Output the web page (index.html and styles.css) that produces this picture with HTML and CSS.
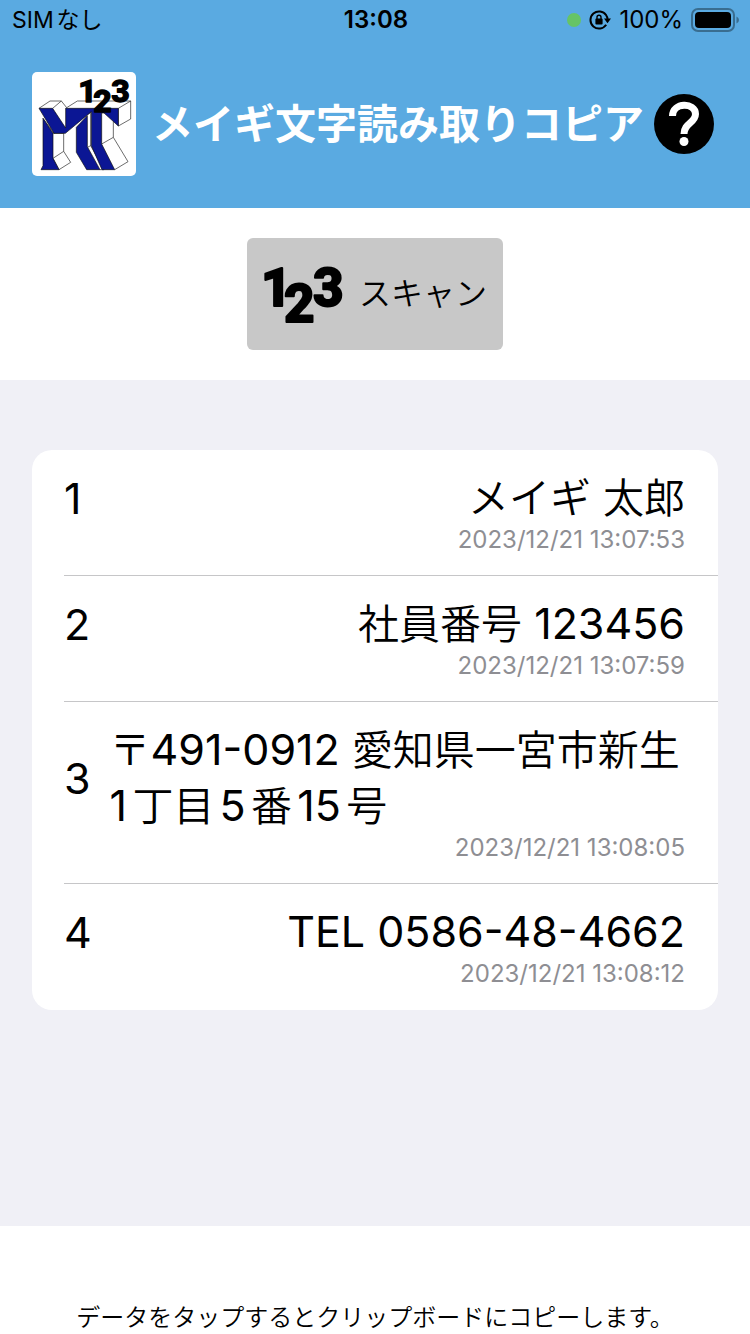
FILE: index.html
```html
<!DOCTYPE html>
<html lang="ja">
<head>
    <meta charset="UTF-8">
    <meta name="viewport" content="width=device-width, initial-scale=1.0">
    <title>メイギ文字読み取りコピア</title>
    <link rel="stylesheet" href="styles.css">
</head>
<body>
    <div class="status-bar">
        <span class="carrier">SIMなし</span>
        <span class="time">13:08</span>
        <span class="indicators">
            <span class="camera-dot"></span>
            <svg class="lock-icon" width="22" height="20" viewBox="0 0 22 20">
                <path d="M17.2 5.2A8.6 8.6 0 1 0 17.2 14.8" fill="none" stroke="#000" stroke-width="2"/>
                <path d="M17 5A9 9 0 0 1 18.6 9" fill="none" stroke="#000" stroke-width="2"/>
                <path d="M15 8.6h7l-3.5 4.6z"/>
                <rect x="6.4" y="8.6" width="7.2" height="5.8" rx="1"/>
                <path d="M8 9V7.2a2 2 0 0 1 4 0V9" fill="none" stroke="#000" stroke-width="1.4"/>
            </svg>
            <span class="percent">100%</span>
            <svg class="battery-icon" width="49" height="24" viewBox="0 0 49 24">
                <rect x="1" y="1" width="42" height="22" rx="6" fill="none" stroke="#396d90" stroke-width="2"/>
                <rect x="4" y="4" width="36" height="16" rx="4"/>
                <path d="M45.500 8.500v7q2.500-1 2.500-3.500t-2.500-3.500z" fill="#396d90"/>
            </svg>
        </span>
    </div>

    <header class="header">
        <svg class="logo" viewBox="24 24 312 312" role="img" aria-label="MT 123">
            <g fill="#fff" stroke="#222" stroke-width="2">
                <path d="M45 133L78 111H112L128 131M86 133L112 111"/>
                <path d="M125 133L160 111H320V165L283 186V133L320 111"/>
                <path d="M87 208H119V262L87 283M119 262L140 295L105 317L87 283"/>
                <path d="M57 163L90 208M190 152L200 145V245L240 317H228M190 250L200 245"/>
                <path d="M268 172V220L233 240M268 220L312 293L272 317"/>
            </g>
            <g fill="#0b1694" stroke="#111" stroke-width="2">
                <path d="M57 163L87 208V283L105 317H51L57 305Z"/>
                <path d="M45 133H86L125 192V133H283V186L240 147H233V240L272 317H234L202 245V143L124 208H90Z"/>
                <path d="M190 155L157 190V265L188 317H228L190 248Z"/>
            </g>
            <g class="digits" font-size="96" stroke-width="4">
                <text x="163" y="115">1</text>
                <text x="208" y="145">2</text>
                <text x="262" y="115">3</text>
            </g>
        </svg>
        <h1>メイギ文字読み取りコピア</h1>
        <button class="help-btn" type="button" aria-label="ヘルプ">
            <svg viewBox="0 0 60 60">
                <circle cx="30" cy="30" r="30"/>
                <path d="M18.500 22C18.500 8 41.500 8 41.500 20C41.500 29 30 29 30 40" fill="none" stroke="#fff" stroke-width="7"/>
                <circle cx="30" cy="47.500" r="4.500" fill="#fff"/>
            </svg>
        </button>
    </header>

    <div class="scan-area">
        <button class="scan-btn" type="button">
            <svg class="scan-icon" width="80" height="72" viewBox="0 0 80 72" aria-hidden="true">
                <g class="digits" font-size="53" stroke-width="2">
                    <text x="-2" y="51">1</text>
                    <text x="21" y="67">2</text>
                    <text x="50" y="51">3</text>
                </g>
            </svg>
            <span>スキャン</span>
        </button>
    </div>

    <main class="content">
        <ol class="entries">
            <li class="entry">
                <button class="entry-btn" type="button">
                    <span class="index">1</span>
                    <span class="text">メイギ<span class="latin"> </span>太郎</span>
                </button>
                <time class="date">2023/12/21 13:07:53</time>
            </li>
            <li class="entry">
                <button class="entry-btn" type="button">
                    <span class="index">2</span>
                    <span class="text">社員番号<span class="latin"> 123456</span></span>
                </button>
                <time class="date">2023/12/21 13:07:59</time>
            </li>
            <li class="entry">
                <button class="entry-btn" type="button">
                    <span class="index">3</span>
                    <span class="text">〒<span class="latin">491-0912 </span>愛知県一宮市新生<span class="latin">1</span>丁目<span class="latin">5</span>番<span class="latin">15</span>号</span>
                </button>
                <time class="date">2023/12/21 13:08:05</time>
            </li>
            <li class="entry">
                <button class="entry-btn" type="button">
                    <span class="index">4</span>
                    <span class="text"><span class="latin">TEL 0586-48-4662</span></span>
                </button>
                <time class="date">2023/12/21 13:08:12</time>
            </li>
        </ol>
    </main>

    <footer class="footer">データをタップするとクリップボードにコピーします。</footer>
</body>
</html>
```

FILE: styles.css
```css
* { margin: 0; padding: 0; box-sizing: border-box; }
body { min-height: 100vh; display: flex; flex-direction: column; font-family: Inter, "Noto Sans CJK JP", sans-serif; background: #fff; color: #000; text-autospace: normal; }
button { font: inherit; color: inherit; border: none; background: none; cursor: pointer; }

/* Status bar */
.status-bar { display: grid; grid-template-columns: 1fr auto 1fr; align-items: center; height: 40px; padding: 0 10px 0 12px; background: #5aaae1; font-size: 24px; line-height: 40px; }
.carrier { font-size: 23px; }
.time { font-weight: 600; }
.indicators { display: flex; align-items: center; justify-content: flex-end; gap: 8px; }
.camera-dot { width: 14px; height: 14px; border-radius: 50%; background: #66c466; }

/* Header */
.header { display: flex; align-items: center; gap: 10px; height: 168px; padding: 0 36px 0 32px; background: #5aaae1; }
.logo { flex: none; width: 104px; height: 104px; border-radius: 5px; background: #fff; }
.header h1 { padding-left: 6px; font-size: 41px; font-weight: 700; line-height: 60px; color: #fff; white-space: nowrap; }
.help-btn { flex: none; width: 60px; height: 60px; margin-left: auto; border-radius: 50%; }
.help-btn svg { display: block; width: 100%; height: 100%; }
.digits { font-family: Roboto, sans-serif; font-weight: 800; fill: #000; stroke: #000; stroke-linejoin: round; }

/* Scan */
.scan-area { display: flex; justify-content: center; padding: 30px 0; }
.scan-btn { display: flex; align-items: center; gap: 16px; height: 112px; padding: 0 16px 6px; border-radius: 6px; background: #c8c8c8; font-size: 32px; font-weight: 350; }
.scan-icon { overflow: visible; }

/* Entries */
.content { flex: 1; padding: 70px 32px; background: #f0f0f6; }
.entries { list-style: none; padding-left: 32px; border-radius: 20px; background: #fff; }
.entry { padding: 20px 33px 21px 0; border-bottom: 1px solid #c6c6c8; }
.entry:last-child { border-bottom-color: transparent; }
.entry-btn { display: flex; align-items: center; justify-content: space-between; gap: 19px; width: 100%; line-height: 56px; text-align: left; }
.index { font-size: 43px; }
.text { font-size: 41px; font-weight: 350; }
.latin { font-size: 43px; font-weight: 400; line-height: 1; }
.date { display: block; font-size: 24px; line-height: 28px; text-align: right; color: #8e8e93; }

.footer { height: 108px; padding-top: 76px; font-size: 24px; font-weight: 350; line-height: 32px; text-align: center; }
```
